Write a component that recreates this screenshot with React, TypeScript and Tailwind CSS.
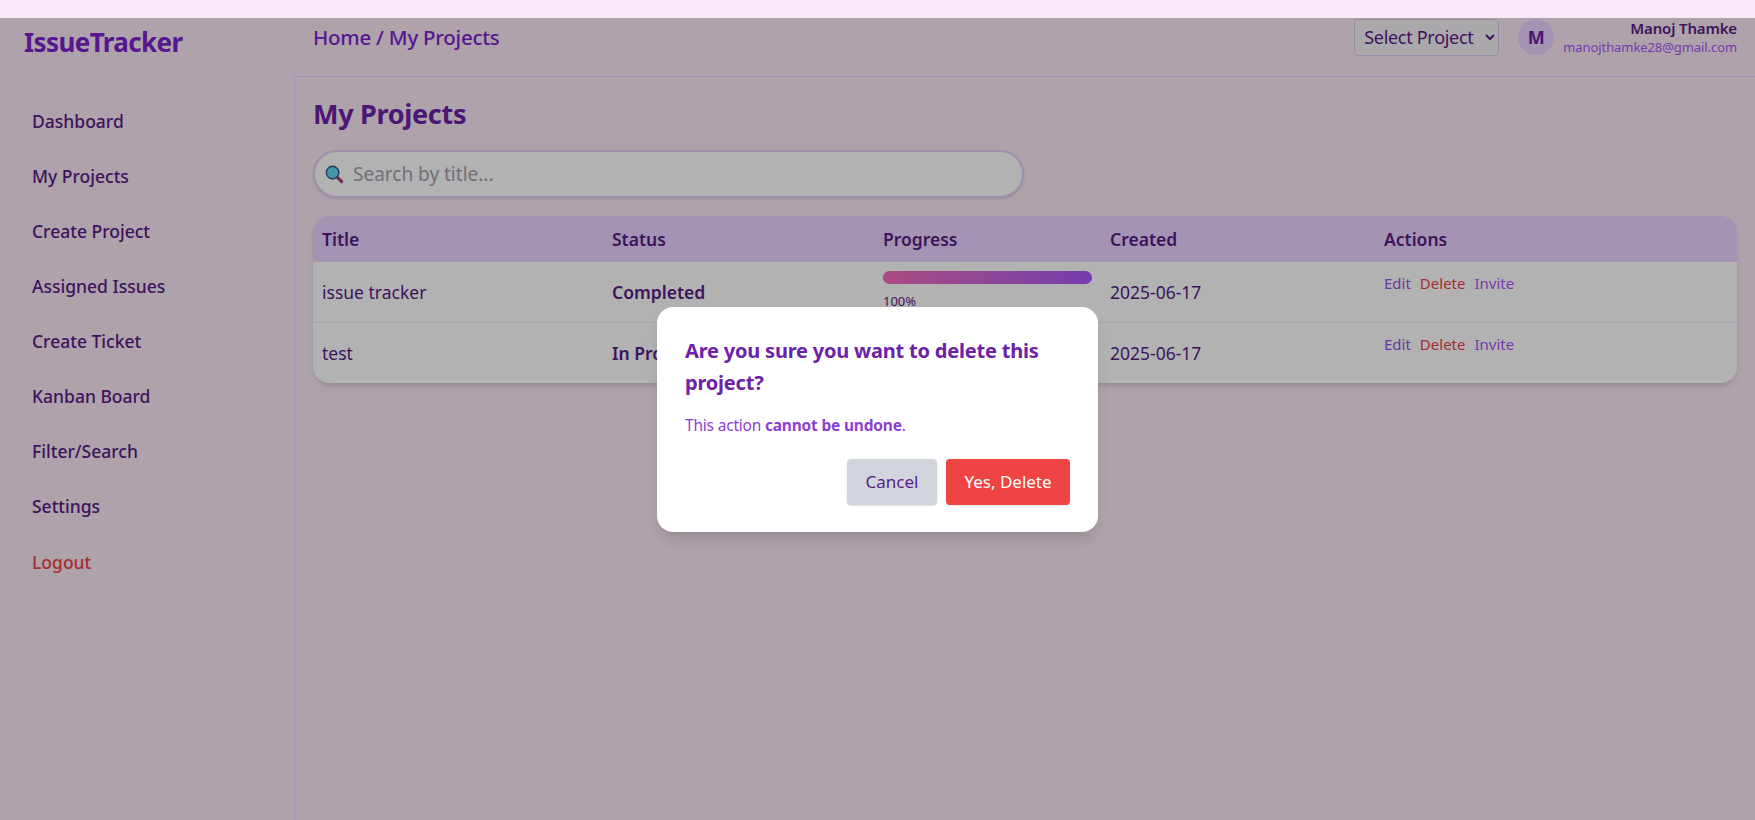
const navItems = [
  "Dashboard",
  "My Projects",
  "Create Project",
  "Assigned Issues",
  "Create Ticket",
  "Kanban Board",
  "Filter/Search",
  "Settings",
];

const projects = [
  { title: "issue tracker", status: "Completed", progress: 100, created: "2025-06-17" },
  { title: "test", status: "In Progress", progress: 40, created: "2025-06-17" },
];

function SearchGlyph() {
  return (
    <svg viewBox="0 0 20 20" className="h-[19px] w-[19px] shrink-0">
      <path d="M12.5 12.5l5 5" stroke="#a0407a" strokeWidth="3.4" strokeLinecap="round" />
      <circle cx="8" cy="8" r="6.6" fill="#66d6f2" stroke="#2b5f86" strokeWidth="1.6" />
    </svg>
  );
}

function Header() {
  return (
    <header className="flex h-[58px] shrink-0 items-start bg-[#f9e8f5]">
      <div className="w-[295px] shrink-0 pl-6 pt-[6px] text-[26px] font-bold leading-[36px] tracking-[-0.6px] text-[#7e22ce]">
        IssueTracker
      </div>
      <div className="flex-1 pl-[18px] pt-[1px] text-[20.5px] font-medium leading-[36px] tracking-[-0.25px] text-[#7e22ce]">
        Home / My Projects
      </div>
      <div className="flex items-center pb-[1px] pr-[18px]">
        <select className="h-[37px] w-[145px] rounded border border-[#e0c8f0] bg-[#f5f1f5] pl-[5px] text-[18px] tracking-[-0.3px] text-[#581c87]">
          <option>Select Project</option>
        </select>
        <div className="ml-[19px] flex h-[36px] w-[36px] items-center justify-center rounded-full bg-[#e9d5ff] text-[18px] font-bold text-[#6b21a8]">
          M
        </div>
        <div className="ml-[9px] text-right">
          <div className="text-[15px] font-semibold leading-[20px] tracking-[-0.15px] text-[#581c87]">
            Manoj Thamke
          </div>
          <div className="text-[13px] leading-[18px] tracking-[-0.08px] text-[#a855f7]">
            manojthamke28@gmail.com
          </div>
        </div>
      </div>
    </header>
  );
}

function Sidebar() {
  return (
    <aside className="w-[295px] shrink-0 border-r border-[#e9d5ff] px-8 pt-[18px]">
      {navItems.map((item) => (
        <div key={item} className="h-[55px] text-[17.5px] font-medium leading-[54px] text-[#581c87]">
          {item}
        </div>
      ))}
      <div className="mt-[1px] h-[55px] text-[17.5px] font-medium leading-[54px] text-[#ef4444]">
        Logout
      </div>
    </aside>
  );
}

function ProjectsTable() {
  return (
    <div className="overflow-hidden rounded-2xl bg-white shadow-md">
      <table className="w-full table-fixed border-collapse text-left">
        <thead className="bg-[#e9d5ff] text-[17.5px] font-semibold text-[#581c87]">
          <tr className="h-[46px]">
            <th className="w-[290px] pl-[9px] font-semibold">Title</th>
            <th className="w-[271px] pl-[9px] font-semibold">Status</th>
            <th className="w-[227px] pl-[9px] font-semibold">Progress</th>
            <th className="w-[274px] pl-[9px] font-semibold">Created</th>
            <th className="pl-[9px] font-semibold">Actions</th>
          </tr>
        </thead>
        <tbody className="text-[17.5px] text-[#581c87]">
          {projects.map((project, i) => (
            <tr key={project.title} className={i === 0 ? "h-[60px] border-b border-[#f3e8ff]" : "h-[61px]"}>
              <td className="pl-[9px]">{project.title}</td>
              <td className="pl-[9px] font-semibold">{project.status}</td>
              <td className="pl-[9px] pr-[9px] align-top pt-[9px]">
                <div className="h-[13px] w-full rounded-full bg-[#e9d5ff]">
                  <div
                    className="h-full rounded-full bg-gradient-to-r from-[#f46cb8] to-[#a855f7]"
                    style={{ width: `${project.progress}%` }}
                  />
                </div>
                <div className="mt-[9px] text-[13px] leading-[16px]">{project.progress}%</div>
              </td>
              <td className="pl-[9px]">{project.created}</td>
              <td className="pl-[9px] pt-[11px] align-top text-[15px] leading-[20px]">
                <span className="text-[#9a50e5]">Edit</span>
                <span className="ml-[9px] text-[#ef4444]">Delete</span>
                <span className="ml-[9px] text-[#a855f7]">Invite</span>
              </td>
            </tr>
          ))}
        </tbody>
      </table>
    </div>
  );
}

function DeleteModal() {
  return (
    <div className="absolute inset-0 flex items-center justify-center bg-black/30">
      <div className="h-[225px] w-[441px] rounded-2xl bg-white px-7 pt-[28px] shadow-lg">
        <h2 className="text-[20px] font-bold leading-[32px] tracking-[-0.2px] text-[#6b21a8]">
          Are you sure you want to delete this project?
        </h2>
        <p className="mt-[15px] text-[15.5px] leading-[22px] tracking-[-0.2px] text-[#8e3fd1]">
          This action <span className="font-bold">cannot be undone</span>.
        </p>
        <div className="mt-[23px] flex justify-end gap-[9px]">
          <button className="h-[46px] w-[90px] rounded bg-[#d1d5db] text-[17px] text-[#581c87] shadow-sm">
            Cancel
          </button>
          <button className="h-[46px] w-[124px] rounded bg-[#ef4444] text-[17px] text-white shadow-sm">
            Yes, Delete
          </button>
        </div>
      </div>
    </div>
  );
}

export default function App() {
  return (
    <div className="flex h-[820px] flex-col overflow-hidden bg-[#f9e8f5] font-['Noto_Sans',sans-serif]">
      <div className="h-[18px] shrink-0" />
      <div className="relative flex min-h-0 flex-1 flex-col">
        <Header />
        <div className="flex min-h-0 flex-1">
          <Sidebar />
          <main className="flex-1 border-t border-[#e9d5ff] px-[18px] pt-[18px]">
            <h1 className="text-[27px] font-bold leading-[38px] tracking-[-0.3px] text-[#6b21a8]">My Projects</h1>
            <div className="mt-[17px] flex h-[48px] w-[711px] items-center gap-[7px] rounded-full border-2 border-[#e3cdf8] bg-white pl-[10px] shadow-sm">
              <SearchGlyph />
              <input
                placeholder="Search by title..."
                className="ml-[2px] mt-[1px] min-w-0 flex-1 bg-transparent text-[19px] text-[#581c87] outline-none placeholder:text-[#a8a0b0]"
              />
            </div>
            <div className="mt-[18px]">
              <ProjectsTable />
            </div>
          </main>
        </div>
        <DeleteModal />
      </div>
    </div>
  );
}
